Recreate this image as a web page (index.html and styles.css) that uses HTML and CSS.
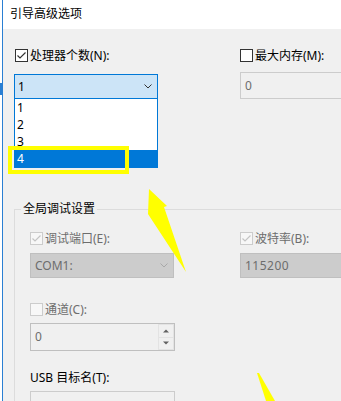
FILE: index.html
```html
<!DOCTYPE html>
<html lang="zh-CN">
<head>
<meta charset="utf-8">
<title>引导高级选项</title>
<link rel="stylesheet" href="styles.css">
</head>
<body>
<div class="screen">
  <div class="edge"><span class="edge-mark"></span></div>
  <div class="window">
    <div class="titlebar">引导高级选项</div>
    <div class="client">
      <div class="top-grid">
        <div class="col">
          <label class="check"><span class="box"><svg viewBox="0 0 11 11"><path d="M1.5 5.5 L4 8 L9.5 2.5"/></svg></span><span>处理器个数(N):</span></label>
          <div class="combo focused"><span>1</span><svg class="chev" viewBox="0 0 8 5"><path d="M0.5 0.5 L4 4 L7.5 0.5"/></svg></div>
          <ul class="droplist">
            <li>1</li>
            <li>2</li>
            <li>3</li>
            <li class="selected">4</li>
          </ul>
        </div>
        <div class="col">
          <label class="check"><span class="box"></span><span>最大内存(M):</span></label>
          <div class="field field-top">0</div>
        </div>
      </div>

      <fieldset class="group">
        <legend>全局调试设置</legend>
        <div class="group-body">
          <div class="grid2">
            <div class="col">
              <label class="check disabled"><span class="box"><svg viewBox="0 0 11 11"><path d="M1.5 5.5 L4 8 L9.5 2.5"/></svg></span><span>调试端口(E):</span></label>
              <div class="combo combo-disabled"><span>COM1:</span><svg class="chev" viewBox="0 0 8 5"><path d="M0.5 0.5 L4 4 L7.5 0.5"/></svg></div>
            </div>
            <div class="col">
              <label class="check disabled"><span class="box"><svg viewBox="0 0 11 11"><path d="M1.5 5.5 L4 8 L9.5 2.5"/></svg></span><span>波特率(B):</span></label>
              <div class="field field-disabled">115200</div>
            </div>
          </div>
          <label class="check disabled check-channel"><span class="box"></span><span>通道(C):</span></label>
          <div class="spin">
            <span class="spin-value">0</span>
            <span class="spin-btns">
              <span class="spin-btn"><svg viewBox="0 0 6 4"><path d="M0 3.5 L3 0.5 L6 3.5 Z"/></svg></span>
              <span class="spin-btn"><svg viewBox="0 0 6 4"><path d="M0 0.5 L3 3.5 L6 0.5 Z"/></svg></span>
            </span>
          </div>
          <div class="usb-label">USB 目标名(T):</div>
          <div class="field usb-field"></div>
        </div>
      </fieldset>
    </div>
  </div>

  <svg class="annot" viewBox="0 0 341 401" width="341" height="401">
    <rect x="10" y="148" width="117" height="24" fill="none" stroke="#ffff00" stroke-width="4"/>
    <polygon points="149,189 167,206 164,207 186,272 148,214" fill="#ffff00"/>
    <polygon points="257,373 259,373 275,401 266,401" fill="#ffff00"/>
  </svg>
</div>
</body>
</html>
```

FILE: styles.css
```css
* { box-sizing: border-box; }

html, body {
  margin: 0;
  padding: 0;
}

body {
  width: 341px;
  height: 401px;
  overflow: hidden;
  background: #f0f0f0;
  font-family: "Noto Sans", "Noto Sans CJK SC", sans-serif;
  font-size: 12px;
  color: #000;
}

.screen {
  position: relative;
  display: flex;
  width: 341px;
  height: 401px;
  overflow: hidden;
}

.edge {
  flex: none;
  width: 3px;
  background: #fff;
  border-right: 1px solid #2a7fd3;
  display: flex;
  flex-direction: column;
}

.edge-mark {
  margin-top: 83px;
  width: 2px;
  height: 12px;
  background: #2a7fd3;
}

.window {
  flex: 1;
  min-width: 0;
  display: flex;
  flex-direction: column;
}

.titlebar {
  height: 29px;
  flex: none;
  background: #fff;
  padding-left: 7px;
  line-height: 28px;
  font-size: 12px;
  color: #000;
}

.client {
  flex: 1;
  background: #f0f0f0;
  padding: 20px 0 0 11px;
}

.top-grid {
  display: grid;
  grid-template-columns: 226px 120px;
}

.col {
  position: relative;
  display: flex;
  flex-direction: column;
  align-items: flex-start;
}

.check {
  display: flex;
  align-items: center;
  gap: 2px;
  height: 13px;
  line-height: 14px;
  white-space: nowrap;
}

.top-grid > .col:first-child > .check {
  margin-left: 1px;
}

.box {
  flex: none;
  width: 13px;
  height: 13px;
  border: 1px solid #333;
  background: #fff;
  display: flex;
}

.box svg {
  width: 11px;
  height: 11px;
}

.box path {
  fill: none;
  stroke: #333;
  stroke-width: 1.2;
}

.disabled {
  color: #6d6d6d;
}

.disabled .box {
  border-color: #cccccc;
  background: #f7f7f7;
}

.disabled .box path {
  stroke: #c4c4c4;
}

.combo {
  width: 144px;
  height: 25px;
  margin-top: 12px;
  display: flex;
  align-items: center;
  justify-content: space-between;
  padding: 0 4px 0 3px;
  border: 1px solid #0078d7;
  background: #cce4f7;
  line-height: 14px;
}

.chev {
  width: 8px;
  height: 5px;
  margin-right: 1px;
}

.chev path {
  fill: none;
  stroke: #333;
  stroke-width: 1;
}

.droplist {
  position: absolute;
  top: 50px;
  left: 0;
  width: 144px;
  margin: 0;
  padding: 0;
  list-style: none;
  background: #fff;
  border: 1px solid #0078d7;
  border-top: none;
  z-index: 2;
}

.droplist li {
  height: 17px;
  line-height: 17px;
  padding-left: 2px;
}

.droplist li.selected {
  background: #0078d7;
  color: #fff;
}

.field {
  width: 120px;
  border: 1px solid #cccccc;
  background: #f0f0f0;
  color: #6d6d6d;
  padding-left: 4px;
  display: flex;
  align-items: center;
  line-height: 14px;
}

.field-top {
  margin-top: 10px;
  height: 27px;
}

.group {
  margin: 103px 0 0 0;
  padding: 0 0 0 6px;
  border: 1px solid #dcdcdc;
  width: 400px;
  min-width: 0;
}

.group legend {
  padding: 0 2px;
  line-height: 14px;
  font-size: 12px;
  color: #000;
}

.group-body {
  padding-left: 9px;
}

.grid2 {
  display: grid;
  grid-template-columns: 210px 120px;
  margin-top: 16px;
}

.combo-disabled {
  margin-top: 8px;
  background: #cccccc;
  border-color: #bfbfbf;
  color: #6d6d6d;
  padding-left: 4px;
}

.combo-disabled .chev path {
  stroke: #a8a8a8;
}

.field-disabled {
  margin-top: 8px;
  height: 25px;
  background: #cccccc;
  border-color: #bfbfbf;
  letter-spacing: 0.5px;
}

.check-channel {
  margin-top: 25px;
}

.spin {
  margin-top: 7px;
  width: 145px;
  height: 28px;
  display: flex;
  border: 1px solid #bfbfbf;
  background: #f0f0f0;
  color: #6d6d6d;
}

.spin-value {
  flex: 1;
  padding-left: 4px;
  display: flex;
  align-items: center;
  line-height: 14px;
}

.spin-btns {
  width: 16px;
  display: flex;
  flex-direction: column;
  border-left: 1px solid #e3e3e3;
}

.spin-btn {
  flex: 1;
  display: flex;
  align-items: center;
  justify-content: center;
  border: 1px solid #e3e3e3;
  border-left: none;
}

.spin-btn + .spin-btn {
  border-top: none;
}

.spin-btn svg {
  width: 6px;
  height: 4px;
}

.spin-btn path {
  fill: #606060;
}

.usb-label {
  margin-top: 20px;
  line-height: 14px;
  color: #000;
}

.usb-field {
  margin-top: 6px;
  width: 145px;
  height: 30px;
}

.annot {
  position: absolute;
  top: 0;
  left: 0;
  pointer-events: none;
  z-index: 5;
}
```
